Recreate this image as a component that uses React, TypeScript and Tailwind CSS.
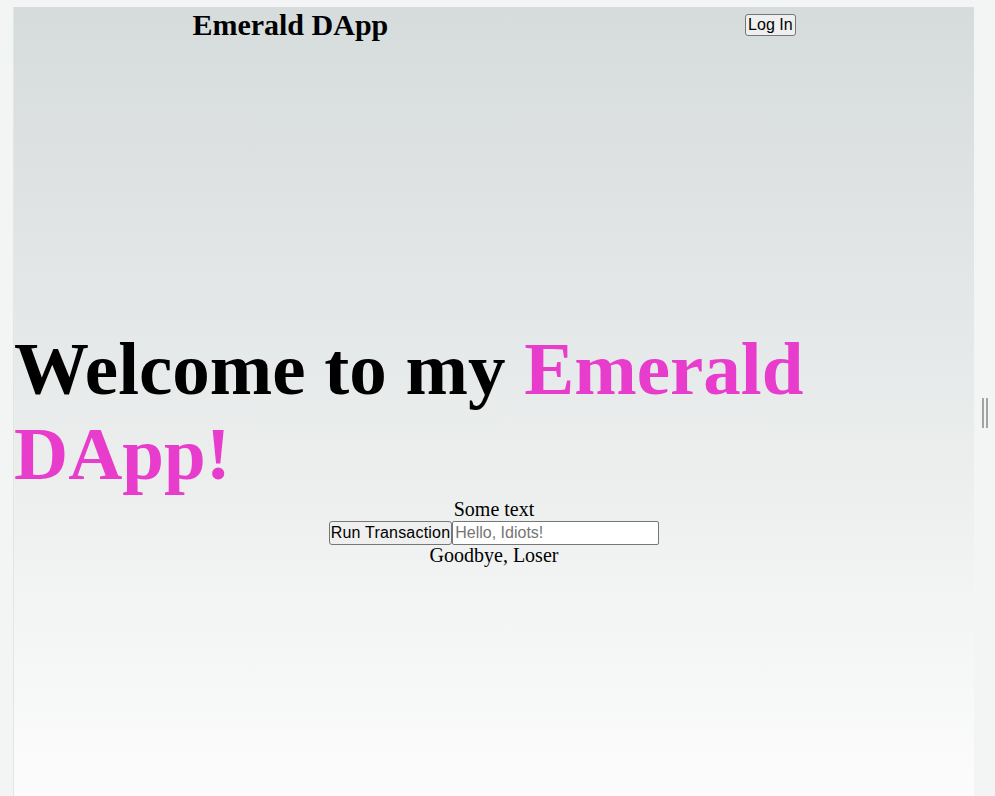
import React from 'react';

const serif = { fontFamily: '"Liberation Serif", "Times New Roman", serif' };

function Nav() {
  return (
    <nav className="flex items-center justify-around h-[36px]">
      <h1 className="text-[30px] leading-[36px] font-bold text-black">Emerald DApp</h1>
      <button className="font-['Liberation_Sans',Arial,sans-serif] text-[16px] leading-[18px] px-[2px] py-[1px] border border-[#767676] rounded-[3px] bg-[#efefef] text-black">
        Log In
      </button>
    </nav>
  );
}

export default function App() {
  return (
    <div className="min-h-screen h-[796px] overflow-hidden bg-[#f3f4f4] flex pt-[7px] pl-[13px]">
      {/* main panel */}
      <div
        className="w-[961px] h-full border-l border-[#e2e5e5] bg-gradient-to-b from-[#d6dbdb] to-[#fcfcfc] flex flex-col text-black"
        style={serif}
      >
        <Nav />

        <main className="mt-[283px]">
          <h2 className="text-[75px] leading-[85px] font-bold">
            Welcome to my <span className="text-[#e83ccc]">Emerald DApp!</span>
          </h2>

          <div className="flex flex-col items-center text-[20px]">
            <p className="mt-[2px] leading-[23px]">Some text</p>
            <div className="flex items-stretch mt-0 font-['Liberation_Sans',Arial,sans-serif]">
              <button className="h-[24px] px-[1px] text-[16px] leading-[18px] tracking-[0.2px] border border-[#767676] rounded-[3px] bg-[#efefef] text-black">
                Run Transaction
              </button>
              <input
                type="text"
                placeholder="Hello, Idiots!"
                className="w-[207px] h-[24px] px-[2px] text-[16px] bg-white border border-[#767676] rounded-[2px] placeholder:text-[#757575] outline-none"
              />
            </div>
            <p className="-mt-[1px] leading-[23px]">Goodbye, Loser</p>
          </div>
        </main>
      </div>

      {/* right splitter gutter */}
      <div className="flex-1 flex items-center justify-center -mt-[7px]">
        <div className="flex gap-[2px] h-[30px] mt-[30px]">
          <div className="w-[2px] bg-[#a3a3a3]" />
          <div className="w-[2px] bg-[#a3a3a3]" />
        </div>
      </div>
    </div>
  );
}
